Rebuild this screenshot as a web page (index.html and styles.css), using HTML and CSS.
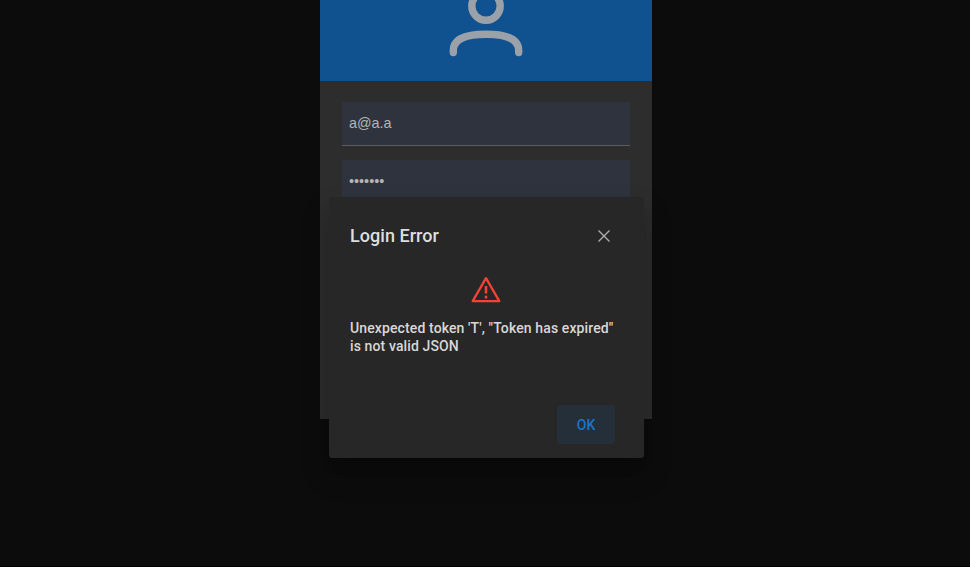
FILE: index.html
```html
<!DOCTYPE html>
<html lang="en">
<head>
<meta charset="utf-8">
<title>Login</title>
<link rel="stylesheet" href="styles.css">
</head>
<body>
<main class="card">
  <header class="banner">
    <svg class="avatar" width="80" height="60" viewBox="0 0 80 60" fill="none" stroke="#9aa1a8" stroke-width="7.4" stroke-linecap="round">
      <circle cx="40" cy="6" r="14.2"/>
      <path d="M7.300 52.600V50.500C7.300 39 20 34.200 40 34.200S72.700 39 72.700 50.500V52.600"/>
    </svg>
  </header>
  <form class="fields">
    <div class="field">a@a.a</div>
    <div class="field">•••••••</div>
  </form>
</main>
<section class="dialog" role="alertdialog">
  <div class="dialog-header">
    <h1>Login Error</h1>
    <svg class="close" width="14" height="14" viewBox="0 0 14 14" fill="none" stroke="#adadad" stroke-width="1.4"><path d="M1.500 1.500 12.500 12.500M12.500 1.500 1.500 12.500"/></svg>
  </div>
  <svg class="warning" width="32" height="28" viewBox="0 0 32 28" fill="none" stroke="#f44336" stroke-width="2">
    <path d="M16 2.200 29.300 25.100H2.700Z" stroke-linejoin="round" stroke-width="2.300"/>
    <path d="M16 10V17.500M16 19.700V22.400" stroke-width="2.500"/>
  </svg>
  <p>Unexpected token 'T', "Token has expired" is not valid JSON</p>
  <div class="actions"><button type="button">OK</button></div>
</section>
</body>
</html>
```
FILE: styles.css
```css
* { box-sizing: border-box; }
body {
  margin: 0;
  height: 567px;
  overflow: hidden;
  background: #0c0c0c;
  border-bottom: 1px solid #000;
  font-family: Roboto, sans-serif;
}
.card {
  width: 332px;
  height: 419px;
  margin-left: 320px;
  background: #2d2d2d;
}
.banner {
  height: 81px;
  display: flex;
  justify-content: center;
  background: #10518f;
}
.avatar { display: block; }
.fields {
  display: flex;
  flex-direction: column;
  gap: 14px;
  padding: 21px 22px;
}
.field {
  height: 44px;
  display: flex;
  align-items: center;
  padding: 0 7px 2px;
  background: #2f333d;
  border-bottom: 1px solid #5e5c61;
  border-radius: 2px 2px 0 0;
  color: #b5b5b5;
  font: 14.4px "Liberation Sans", sans-serif;
}
.dialog {
  position: absolute;
  left: 329px;
  top: 197px;
  width: 315px;
  height: 261px;
  padding: 29px 29px 14px 21px;
  display: flex;
  flex-direction: column;
  background: #272727;
  border-radius: 3px;
  box-shadow: 0 11px 15px -7px rgba(0,0,0,.2), 0 16px 28px 2px rgba(0,0,0,.2);
}
.dialog-header {
  height: 20px;
  display: flex;
  align-items: center;
  justify-content: space-between;
  padding-right: 4px;
}
h1 {
  margin: 0;
  color: #dedede;
  font-size: 18px;
  line-height: 20px;
  font-weight: 500;
  letter-spacing: 0.04px;
}
.warning { display: block; margin: 30px 0 0 120px; }
p {
  margin: 15px -6px 0 0;
  color: #d8d8d8;
  font-size: 14px;
  line-height: 18px;
  font-weight: 500;
  letter-spacing: 0.12px;
}
.actions {
  display: flex;
  justify-content: flex-end;
  margin-top: auto;
}
button {
  width: 58px;
  height: 39px;
  padding: 0;
  border: 0;
  border-radius: 3px;
  background: #252f39;
  color: #1b74ca;
  font: 500 14px Roboto, sans-serif;
}
```
